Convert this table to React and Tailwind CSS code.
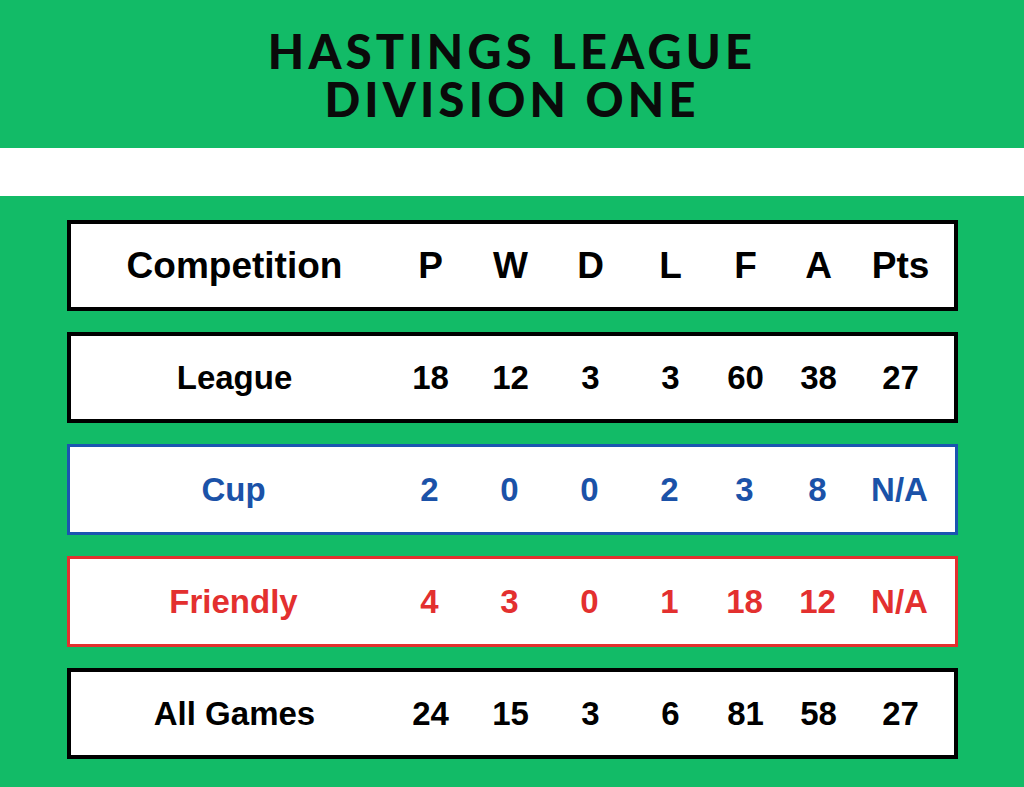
const COLS = "grid grid-cols-[328px_64px_96px_64px_96px_54px_92px_72px] items-center";

const rows = [
  { name: "League", vals: ["18", "12", "3", "3", "60", "38", "27"], box: "border-4 border-black", text: "text-black" },
  { name: "Cup", vals: ["2", "0", "0", "2", "3", "8", "N/A"], box: "border-[3px] border-[#1b55b0]", text: "text-[#1b52a8]" },
  { name: "Friendly", vals: ["4", "3", "0", "1", "18", "12", "N/A"], box: "border-[3px] border-[#e3302f]", text: "text-[#e3302f]" },
  { name: "All Games", vals: ["24", "15", "3", "6", "81", "58", "27"], box: "border-4 border-black", text: "text-black" },
];

function Row({ box, text, children }) {
  return (
    <div className={`h-[91px] bg-white ${box} ${text} flex items-center`}>
      <div className={`${COLS} w-full`}>{children}</div>
    </div>
  );
}

export default function App() {
  return (
    <div className="w-[1024px] h-[787px] bg-[#12bb67] font-['Liberation_Sans',Arial,sans-serif] font-bold">
      <header className="h-[148px] pt-[2px] flex flex-col items-center justify-center font-['Lato',sans-serif] font-black text-[47px] leading-[48px] tracking-[0.09em] text-[#0a0a0a]">
        <div className="h-[48px]">HASTINGS LEAGUE</div>
        <div className="h-[48px]">DIVISION ONE</div>
      </header>
      <div className="h-[48px] bg-white" />

      <main className="w-[891px] mx-auto pt-[24px] flex flex-col gap-[21px]">
        <Row box="border-4 border-black" text="text-black">
          <div className="text-center text-[37px]">Competition</div>
          {["P", "W", "D", "L", "F", "A", "Pts"].map((h) => (
            <div key={h} className="text-center text-[37px]">{h}</div>
          ))}
        </Row>
        {rows.map((r) => (
          <Row key={r.name} box={r.box} text={r.text}>
            <div className="text-center text-[33px]">{r.name}</div>
            {r.vals.map((v, i) => (
              <div key={i} className="text-center text-[33px]">{v}</div>
            ))}
          </Row>
        ))}
      </main>
    </div>
  );
}
